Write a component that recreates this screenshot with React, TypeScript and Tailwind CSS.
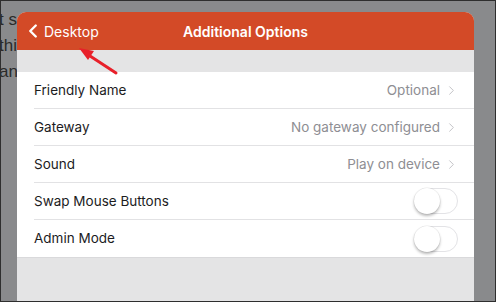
import { ChevronLeft, ChevronRight } from "lucide-react";

const rows = [
  { label: "Friendly Name", value: "Optional" },
  { label: "Gateway", value: "No gateway configured" },
  { label: "Sound", value: "Play on device" },
];

const toggles = ["Swap Mouse Buttons", "Admin Mode"];

function Toggle() {
  return (
    <div className="relative h-[26px] w-[44px] rounded-full border border-[#e3e3e6] bg-white">
      <span className="absolute -left-px -top-px size-[26px] rounded-full bg-white shadow-[0_2px_3px_rgba(0,0,0,0.28),0_0_0_0.5px_rgba(0,0,0,0.08)]" />
    </div>
  );
}

export default function App() {
  return (
    <div className="relative h-[302px] w-[496px] overflow-hidden border border-[#2e2e2e] bg-[#898a8c] font-['Inter',sans-serif]">
      {/* dimmed page behind the sheet, only the left edge peeks out */}
      <div className="ml-[-2px] flex w-[18px] flex-col gap-[7px] overflow-hidden pt-[9px] font-['Liberation_Sans',sans-serif] text-[17px] leading-[19px] text-[#2a2a2a] whitespace-nowrap">
        <p>t st</p>
        <p>thi</p>
        <p>anc</p>
      </div>

      <div className="absolute bottom-0 left-[16px] top-[11px] flex w-[457px] flex-col overflow-hidden rounded-t-[9px] bg-[#e4e4e5]">
        <header className="relative flex h-[38px] shrink-0 items-center justify-center bg-[#d34a27] text-white">
          <div className="absolute left-[5px] top-0 flex h-full items-center gap-[0px]">
            <ChevronLeft size={22} strokeWidth={2.6} />
            <span className="text-[14px]">Desktop</span>
          </div>
          <h1 className="text-[14px] font-semibold">Additional Options</h1>
        </header>

        <div className="mt-[22px] bg-white">
          {rows.map((r) => (
            <div key={r.label} className="ml-[17px] flex h-[37px] items-center border-b border-[#e2e2e4] pr-[15px]">
              <span className="flex-1 text-[13.5px] text-[#1c1c1e]">{r.label}</span>
              <span className="text-[13.5px] text-[#8e8e93]">{r.value}</span>
              <ChevronRight size={15} strokeWidth={1.6} className="ml-[4px] text-[#c4c4c8]" />
            </div>
          ))}
          {toggles.map((t, i) => (
            <div
              key={t}
              className={`ml-[17px] flex h-[37px] items-center pr-[16px] ${i === 0 ? "border-b border-[#e2e2e4]" : ""}`}
            >
              <span className="flex-1 text-[13.5px] text-[#1c1c1e]">{t}</span>
              <Toggle />
            </div>
          ))}
        </div>
        <div className="border-t border-[#d9d9db]" />
      </div>

      {/* red callout arrow */}
      <svg className="absolute left-0 top-0" width="496" height="302" viewBox="0 0 496 302">
        <line x1="115" y1="72" x2="86" y2="53" stroke="#e8202a" strokeWidth="3" strokeLinecap="round" />
        <polygon points="78,47 93,50 87,59" fill="#e8202a" />
      </svg>
    </div>
  );
}
